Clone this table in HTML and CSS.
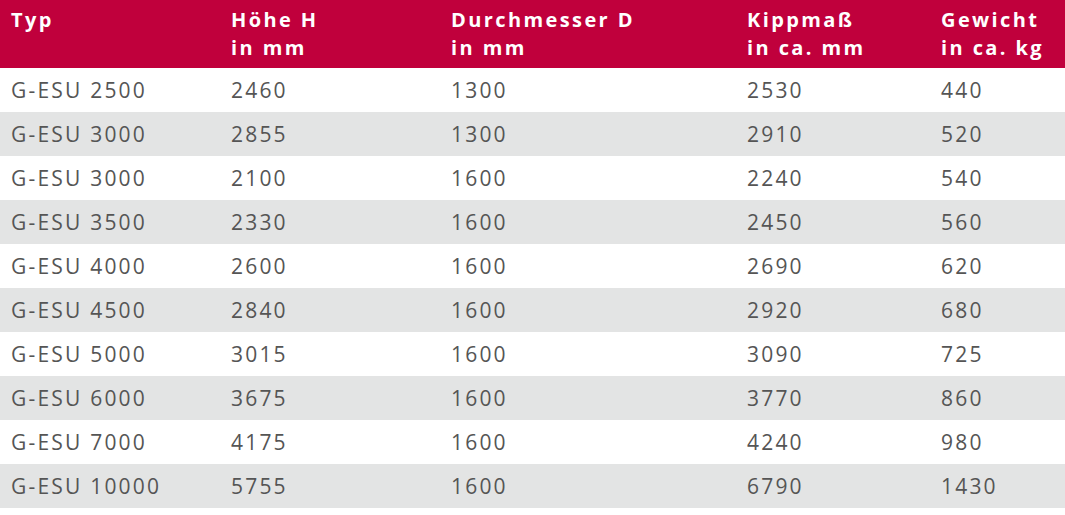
FILE: index.html
```html
<!DOCTYPE html>
<html lang="de">
<head>
<meta charset="utf-8">
<link rel="stylesheet" href="styles.css">
</head>
<body>
<table class="spec">
  <thead>
    <tr>
      <th class="c1">Typ</th>
      <th class="c2">Höhe H<br>in mm</th>
      <th class="c3">Durchmesser D<br>in mm</th>
      <th class="c4">Kippmaß<br>in ca. mm</th>
      <th class="c5">Gewicht<br>in ca. kg</th>
    </tr>
  </thead>
  <tbody>
    <tr><td>G-ESU 2500</td><td>2460</td><td>1300</td><td>2530</td><td>440</td></tr>
    <tr><td>G-ESU 3000</td><td>2855</td><td>1300</td><td>2910</td><td>520</td></tr>
    <tr><td>G-ESU 3000</td><td>2100</td><td>1600</td><td>2240</td><td>540</td></tr>
    <tr><td>G-ESU 3500</td><td>2330</td><td>1600</td><td>2450</td><td>560</td></tr>
    <tr><td>G-ESU 4000</td><td>2600</td><td>1600</td><td>2690</td><td>620</td></tr>
    <tr><td>G-ESU 4500</td><td>2840</td><td>1600</td><td>2920</td><td>680</td></tr>
    <tr><td>G-ESU 5000</td><td>3015</td><td>1600</td><td>3090</td><td>725</td></tr>
    <tr><td>G-ESU 6000</td><td>3675</td><td>1600</td><td>3770</td><td>860</td></tr>
    <tr><td>G-ESU 7000</td><td>4175</td><td>1600</td><td>4240</td><td>980</td></tr>
    <tr><td>G-ESU 10000</td><td>5755</td><td>1600</td><td>6790</td><td>1430</td></tr>
  </tbody>
</table>
</body>
</html>
```

FILE: styles.css
```css
html, body {
  margin: 0;
  padding: 0;
  background: #ffffff;
}
.spec {
  width: 1065px;
  border-collapse: collapse;
  table-layout: fixed;
  font-family: "Open Sans", "Noto Sans", sans-serif;
}
.spec th {
  background: #c0003c;
  color: #ffffff;
  font-size: 20px;
  font-weight: 700;
  letter-spacing: 2.4px;
  text-align: left;
  vertical-align: top;
  height: 68px;
  padding: 6px 0 0 11px;
  line-height: 28px;
  box-sizing: border-box;
}
.spec .c1 { width: 220px; }
.spec .c2 { width: 220px; }
.spec .c3 { width: 296px; }
.spec .c4 { width: 194px; }
.spec td {
  color: #555555;
  font-size: 21px;
  letter-spacing: 2.2px;
  height: 44px;
  padding: 1px 0 0 11px;
  line-height: 43px;
  box-sizing: border-box;
  white-space: nowrap;
}
.spec tbody tr:nth-child(even) td {
  background: #e3e4e4;
}
```
